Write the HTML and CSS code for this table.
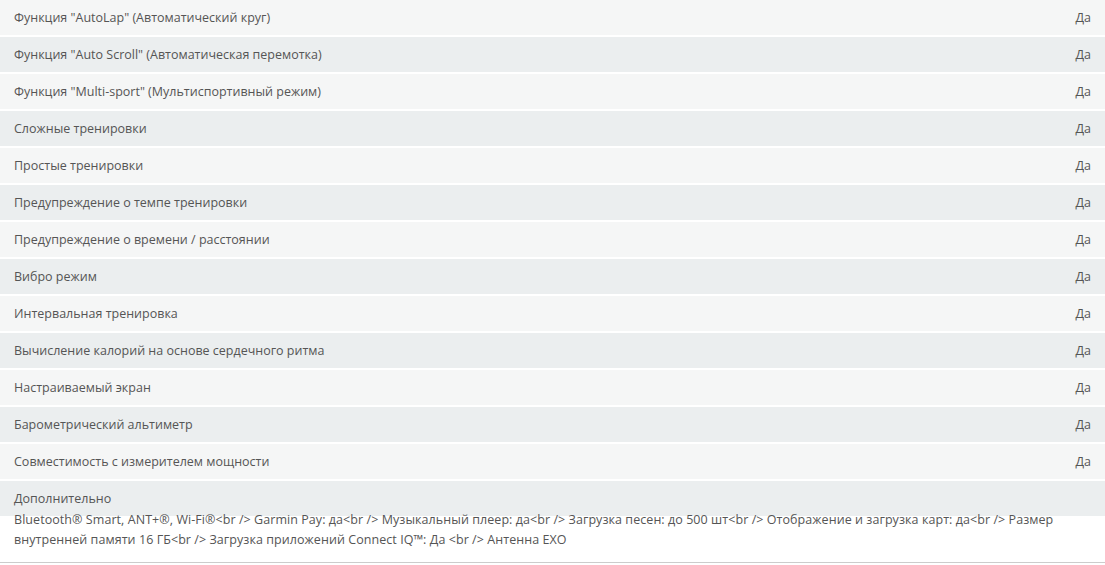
FILE: index.html
```html
<!DOCTYPE html>
<html lang="ru">
<head>
<meta charset="utf-8">
<link rel="stylesheet" href="styles.css">
</head>
<body>
<div class="specs">
  <div class="row"><span class="label">Функция "AutoLap" (Автоматический круг)</span><span class="value">Да</span></div>
  <div class="row"><span class="label">Функция "Auto Scroll" (Автоматическая перемотка)</span><span class="value">Да</span></div>
  <div class="row"><span class="label">Функция "Multi-sport" (Мультиспортивный режим)</span><span class="value">Да</span></div>
  <div class="row"><span class="label">Сложные тренировки</span><span class="value">Да</span></div>
  <div class="row"><span class="label">Простые тренировки</span><span class="value">Да</span></div>
  <div class="row"><span class="label">Предупреждение о темпе тренировки</span><span class="value">Да</span></div>
  <div class="row"><span class="label">Предупреждение о времени / расстоянии</span><span class="value">Да</span></div>
  <div class="row"><span class="label">Вибро режим</span><span class="value">Да</span></div>
  <div class="row"><span class="label">Интервальная тренировка</span><span class="value">Да</span></div>
  <div class="row"><span class="label">Вычисление калорий на основе сердечного ритма</span><span class="value">Да</span></div>
  <div class="row"><span class="label">Настраиваемый экран</span><span class="value">Да</span></div>
  <div class="row"><span class="label">Барометрический альтиметр</span><span class="value">Да</span></div>
  <div class="row"><span class="label">Совместимость с измерителем мощности</span><span class="value">Да</span></div>
  <div class="row row-long"><span class="label">Дополнительно</span><span class="value">Bluetooth® Smart, ANT+®, Wi-Fi®&lt;br /&gt; Garmin Pay: да&lt;br /&gt; Музыкальный плеер: да&lt;br /&gt; Загрузка песен: до 500 шт&lt;br /&gt; Отображение и загрузка карт: да&lt;br /&gt; Размер внутренней памяти 16 ГБ&lt;br /&gt; Загрузка приложений Connect IQ™: Да &lt;br /&gt; Антенна EXO</span></div>
</div>
<div class="divider"></div>
</body>
</html>
```

FILE: styles.css
```css
html, body {
  margin: 0;
  padding: 0;
  background: #ffffff;
}
body {
  font-family: "Open Sans", "Noto Sans", sans-serif;
  font-size: 12.5px;
  color: #555555;
}
.specs {
  display: flex;
  flex-direction: column;
}
.row {
  display: flex;
  justify-content: space-between;
  align-items: flex-start;
  box-sizing: border-box;
  height: 37px;
  padding: 8px 14px 0 14px;
  line-height: 20px;
  background: #f5f6f6;
  border-bottom: 2px solid #ffffff;
}
.row:nth-child(even) {
  background: #ebeeef;
}
.row-long {
  display: block;
}
.row-long .value {
  display: block;
  margin-top: 1px;
  letter-spacing: 0.005em;
}
.divider {
  margin-top: 44px;
  height: 1px;
  background: #cccccc;
}
```
